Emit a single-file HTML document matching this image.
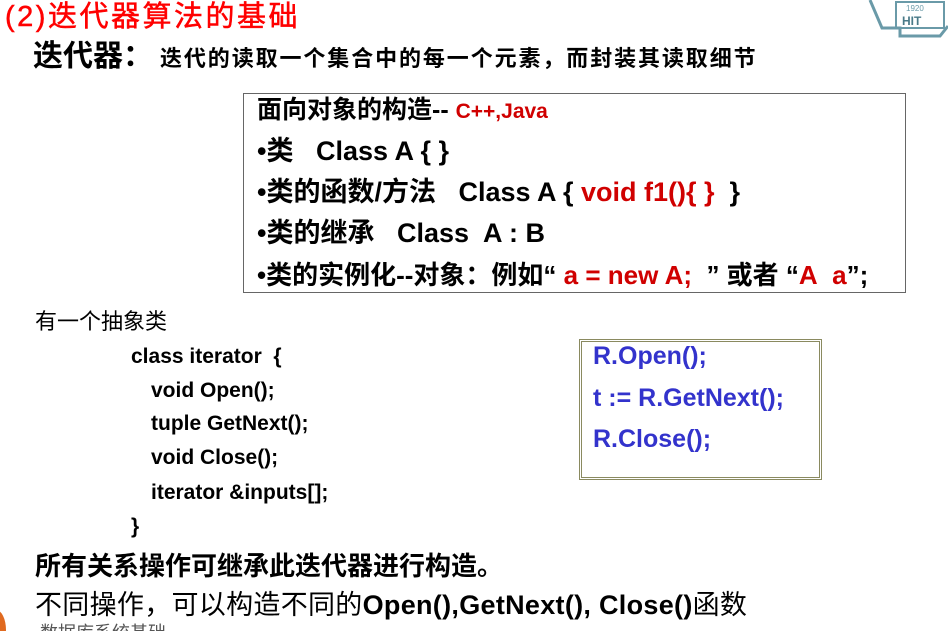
<!DOCTYPE html>
<html><head><meta charset="utf-8"><style>
html,body{margin:0;width:948px;height:631px;overflow:hidden;background:#fff;position:relative;font-family:"Liberation Sans","Noto Sans CJK SC",sans-serif;}
.a{position:absolute;white-space:nowrap;line-height:1;}
.b{font-weight:bold;}
.r{color:#d00000;}
</style></head><body>
<div class="a" style="left:5px;top:3px;font-size:29px;letter-spacing:2.5px;color:#ff0000;-webkit-text-stroke:0.5px #ff0000;">(2)迭代器算法的基础</div>
<svg class="a" style="left:860px;top:0" width="88" height="45"><path d="M10 0 L22 28 L40 28 L40 36 L80 36 L88 26" fill="none" stroke="#6a9aa8" stroke-width="3"/><rect x="36" y="2" width="48" height="26" fill="none" stroke="#6a9aa8" stroke-width="2"/><text x="46" y="11" font-size="8" fill="#6a9aa8" font-family="Liberation Sans">1920</text><text x="42" y="25" font-size="12" font-weight="bold" fill="#4a7a88" font-family="Liberation Sans">HIT</text></svg>
<div class="a b" style="left:33px;top:42px;font-size:30px;">迭代器：</div>
<div class="a b" style="left:160px;top:48px;font-size:22px;letter-spacing:1.9px;">迭代的读取一个集合中的每一个元素，而封装其读取细节</div>
<div class="a" style="left:243px;top:93px;width:661px;height:198px;border:1px solid #666;"></div>
<div class="a b" style="left:257px;top:98px;font-size:25px;">面向对象的构造-- <span class="r" style="font-size:21px;">C++,Java</span></div>
<div class="a b" style="left:257px;top:138px;font-size:27px;">•类&nbsp;&nbsp; Class A { }</div>
<div class="a b" style="left:257px;top:179px;font-size:27px;">•类的函数/方法&nbsp;&nbsp; Class A { <span class="r">void f1(){ }</span>&nbsp;&nbsp;}</div>
<div class="a b" style="left:257px;top:220px;font-size:27px;">•类的继承&nbsp;&nbsp; Class&nbsp; A : B</div>
<div class="a b" style="left:257px;top:262px;font-size:26px;">•类的实例化--对象：例如“ <span class="r">a = new A;</span>&nbsp; ” 或者 “<span class="r">A&nbsp; a</span>”;</div>
<div class="a" style="left:35px;top:311px;font-size:22px;">有一个抽象类</div>
<div class="a b" style="left:131px;top:346px;font-size:21px;">class iterator&nbsp; {</div>
<div class="a b" style="left:151px;top:380px;font-size:21px;">void Open();</div>
<div class="a b" style="left:151px;top:413px;font-size:21px;">tuple GetNext();</div>
<div class="a b" style="left:151px;top:447px;font-size:21px;">void Close();</div>
<div class="a b" style="left:151px;top:482px;font-size:21px;">iterator &amp;inputs[];</div>
<div class="a b" style="left:131px;top:516px;font-size:21px;">}</div>
<div class="a" style="left:579px;top:339px;width:237px;height:135px;border:3px double #8a8a60;"></div>
<div class="a b" style="left:593px;top:344px;font-size:25px;color:#3333cc;">R.Open();</div>
<div class="a b" style="left:593px;top:386px;font-size:25px;color:#3333cc;">t := R.GetNext();</div>
<div class="a b" style="left:593px;top:427px;font-size:25px;color:#3333cc;">R.Close();</div>
<div class="a b" style="left:35px;top:553px;font-size:26px;">所有关系操作可继承此迭代器进行构造。</div>
<div class="a" style="left:35px;top:592px;font-size:27px;letter-spacing:0.3px;">不同操作，可以构造不同的<b>Open(),GetNext(), Close()</b>函数</div>
<div class="a" style="left:40px;top:624px;font-size:18px;color:#555;">数据库系统基础</div>
<div class="a" style="left:-14px;top:610px;width:20px;height:40px;border-radius:50%;background:#e06a20;"></div>
</body></html>
